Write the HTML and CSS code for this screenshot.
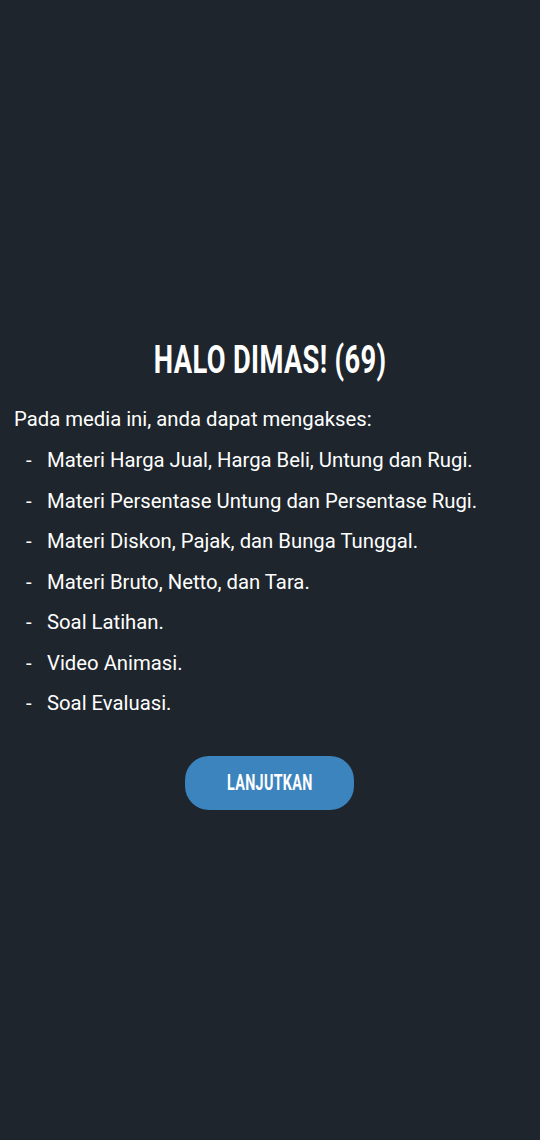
FILE: index.html
```html
<!DOCTYPE html>
<html lang="id">
<head>
<meta charset="utf-8">
<title>Halo</title>
<link rel="stylesheet" href="styles.css">
</head>
<body>
<main class="screen">
  <h1 class="title"><span class="title-text">HALO DIMAS! (69)</span></h1>
  <p class="intro">Pada media ini, anda dapat mengakses:</p>
  <ul class="menu">
    <li><span class="dash">-</span><span>Materi Harga Jual, Harga Beli, Untung dan Rugi.</span></li>
    <li><span class="dash">-</span><span>Materi Persentase Untung dan Persentase Rugi.</span></li>
    <li><span class="dash">-</span><span>Materi Diskon, Pajak, dan Bunga Tunggal.</span></li>
    <li><span class="dash">-</span><span>Materi Bruto, Netto, dan Tara.</span></li>
    <li><span class="dash">-</span><span>Soal Latihan.</span></li>
    <li><span class="dash">-</span><span>Video Animasi.</span></li>
    <li><span class="dash">-</span><span>Soal Evaluasi.</span></li>
  </ul>
  <div class="actions">
    <button class="btn"><span class="btn-text">LANJUTKAN</span></button>
  </div>
</main>
</body>
</html>
```
FILE: styles.css
```css
html, body {
  margin: 0;
  padding: 0;
  background: #1e252c;
}
body {
  width: 540px;
  height: 1140px;
  overflow: hidden;
  font-family: Roboto, "Noto Sans", sans-serif;
  color: #ffffff;
}
.screen {
  padding-top: 336px;
}
.title {
  margin: 0;
  height: 48px;
  line-height: 48px;
  text-align: center;
  font-weight: 700;
  font-size: 39px;
}
.title-text {
  display: inline-block;
  transform: scaleX(0.7);
  letter-spacing: 0.5px;
}
.intro {
  margin: 22px 0 0 14px;
  font-size: 20.3px;
  line-height: 26px;
}
.menu {
  list-style: none;
  margin: 8px 0 0 0;
  padding: 0 0 0 26px;
  font-size: 20.3px;
}
.menu li {
  display: flex;
  height: 40.5px;
  line-height: 40.5px;
}
.dash {
  width: 21px;
}
.actions {
  display: flex;
  justify-content: center;
  margin-top: 32px;
}
.btn {
  width: 169px;
  height: 54px;
  border: none;
  border-radius: 24px;
  background: #3b84bd;
  color: #ffffff;
  font-family: Roboto, sans-serif;
  font-weight: 700;
  font-size: 22px;
  padding: 0;
  margin-left: -1px;
}
.btn-text {
  display: inline-block;
  transform: scaleX(0.65);
  letter-spacing: 0.5px;
}
```
